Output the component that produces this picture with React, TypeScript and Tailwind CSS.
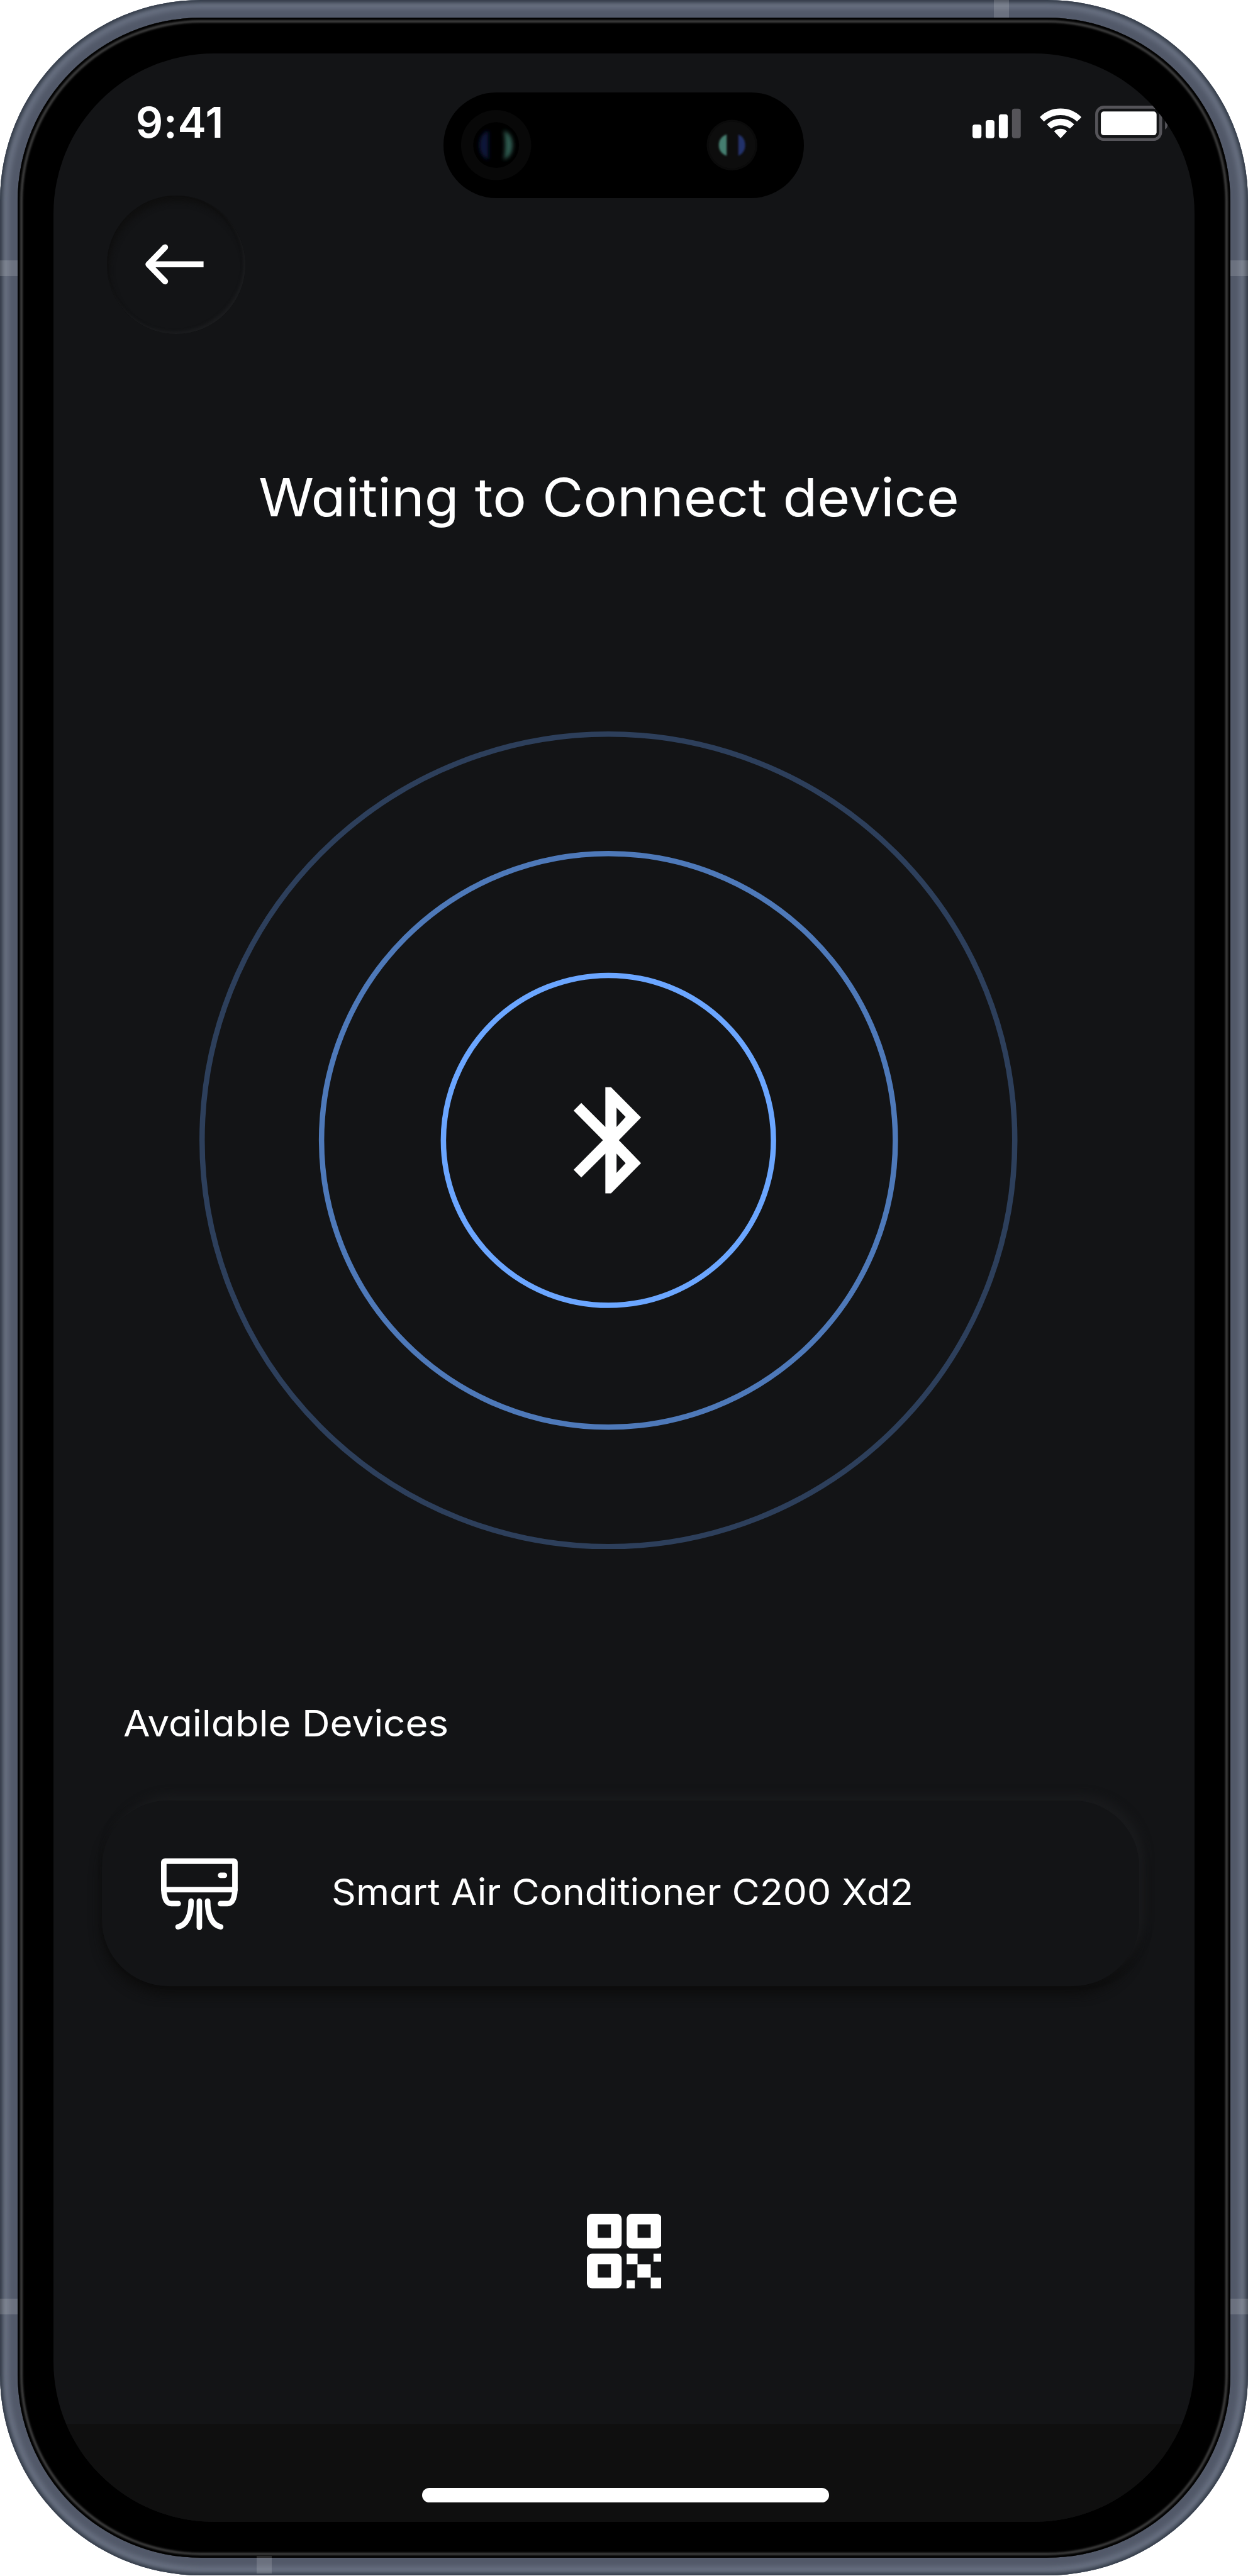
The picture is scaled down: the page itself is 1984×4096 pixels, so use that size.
import React from "react";

const BANDS = [
  "left-0 top-[413.8px] h-[24.8px] w-[28px]",
  "right-0 top-[413.8px] h-[24.8px] w-[28px]",
  "left-0 top-[3655px] h-[24.8px] w-[28px]",
  "right-0 top-[3655px] h-[24.8px] w-[28px]",
  "left-[1579.5px] top-0 h-[28px] w-[24.8px]",
  "left-[407.6px] top-[4064px] h-[28px] w-[24.8px]",
];

function StatusIcons() {
  return (
    <svg viewBox="105 82 1215 217" className="mt-[14.2px] h-[56.06px] w-[313.9px]">
      <g fill="#fff">
        <rect x="105" y="198" width="55" height="84" rx="15" />
        <rect x="186" y="171" width="54" height="111" rx="15" />
        <rect x="267" y="135" width="55" height="147" rx="15" />
        <rect x="348" y="100" width="54" height="182" rx="15" fill="#555459" />
      </g>
      <g fill="#fff" stroke="#fff" strokeWidth="6" strokeLinejoin="round">
        <path d="M523 153 A178 178 0 0 1 771 153 L748 176 A152 152 0 0 0 545 176 Z" />
        <path d="M567 197 A118 118 0 0 1 727 197 L704 219 A95 95 0 0 0 589 219 Z" />
        <path d="M611 240 A58 58 0 0 1 683 240 L647 278 Z" />
      </g>
      <rect x="869" y="91" width="394" height="199" rx="45" fill="none" stroke="#555459" strokeWidth="18" />
      <rect x="895" y="118" width="343" height="146" rx="18" fill="#fff" />
      <path d="M1290 152 C1313 160 1313 220 1290 228 Z" fill="#555459" />
    </svg>
  );
}

function DynamicIsland() {
  return (
    <div className="absolute left-[620px] top-[62px] h-[167.4px] w-[573px] rounded-full bg-black">
      <svg viewBox="910 190 739.5 216" className="h-full w-full">
        <defs>
          <filter id="lens" x="-50%" y="-50%" width="200%" height="200%">
            <feGaussianBlur stdDeviation="4" />
          </filter>
          <filter id="lensSmall" x="-50%" y="-50%" width="200%" height="200%">
            <feGaussianBlur stdDeviation="2.4" />
          </filter>
        </defs>
        <circle cx="1018" cy="298" r="72" fill="#080808" />
        <circle cx="1018" cy="298" r="47" fill="#000" />
        <g filter="url(#lens)">
          <path d="M1002 268 Q984 276 984 298 Q984 320 1002 328 Z" fill="#10193a" />
          <path d="M1034 268 Q1052 276 1052 298 Q1052 320 1034 328 Q1039 298 1034 268 Z" fill="#2f5a4f" />
        </g>
        <circle cx="1502" cy="298" r="52" fill="#0a0a0a" />
        <circle cx="1502" cy="298" r="48" fill="#0d0d0d" />
        <g filter="url(#lensSmall)">
          <path d="M1491 276 Q1475 282 1475 298 Q1475 314 1491 320 Z" fill="#447e70" />
          <path d="M1515 276 Q1529 282 1529 298 Q1529 314 1515 320 Z" fill="#22306a" />
        </g>
      </svg>
    </div>
  );
}

function BackButton() {
  return (
    <button className="ml-[84.5px] flex size-[220px] items-center justify-center rounded-full bg-[#131416] pr-[4.3px] shadow-[inset_-3px_-4px_4px_#1b1c1e,inset_3px_9px_10px_#0f0f0f]">
      <svg viewBox="298 500 120 86" className="h-[66.65px] w-[93px]" fill="none" stroke="#fff" strokeWidth="12.4">
        <path d="M338.5 508 L304.5 543 L338.5 578" strokeLinecap="round" strokeLinejoin="round" />
        <path d="M304.5 543 H417.5" />
      </svg>
    </button>
  );
}

function Radar() {
  return (
    <svg viewBox="0 0 1678 1678" className="mt-[320.9px] size-[1300.5px]">
      <g fill="none" strokeWidth="11">
        <circle cx="839" cy="839" r="833.5" stroke="#2d3f5b" />
        <circle cx="839" cy="839" r="588.5" stroke="#4e79b9" />
        <circle cx="839" cy="839" r="338.5" stroke="#6ba6ff" />
      </g>
      <path
        transform="translate(691 680) scale(0.33333)"
        fill="#fff"
        fillRule="evenodd"
        d="M425 150 H460 L645 336 L508 476 L645 617 L460 803 H425 V558 L277 705 L230 658 L410 476 L230 294 L277 247 L425 395 Z M494 276 V395 L550 333 Z M494 558 V677 L550 617 Z"
      />
    </svg>
  );
}

function AirConditionerIcon() {
  return (
    <svg
      viewBox="62 70 472 440"
      className="mt-[3.7px] h-[113.7px] w-[121.9px]"
      fill="none"
      stroke="#fff"
      strokeWidth="34"
      strokeLinecap="round"
      strokeLinejoin="round"
    >
      <path d="M168 348 H125 C98 348 82 320 79 262 V95 Q79 87 87 87 H509 Q517 87 517 95 V262 C514 320 498 348 471 348 H428" />
      <path d="M79 262 H517" />
      <path d="M429 174 H452" />
      <path d="M298 333 V494" />
      <path d="M247 333 C247 420 220 480 167 491" />
      <path d="M349 333 C349 420 376 480 429 491" />
    </svg>
  );
}

function QrIcon() {
  return (
    <svg viewBox="130 127 460 459" className="mt-[362px] h-[118.6px] w-[118.8px] self-center">
      <g fill="#fff">
        <rect x="130" y="127" width="214" height="214" rx="32" />
        <rect x="375" y="127" width="215" height="214" rx="32" />
        <rect x="130" y="373" width="214" height="213" rx="32" />
        <rect x="375" y="373" width="67" height="65" />
        <rect x="540" y="373" width="50" height="49" />
        <rect x="441" y="438" width="82" height="82" />
        <rect x="523" y="520" width="67" height="66" />
        <rect x="375" y="536" width="50" height="50" />
      </g>
      <g fill="#131416">
        <rect x="197" y="193" width="81" height="82" />
        <rect x="442" y="193" width="81" height="82" />
        <rect x="197" y="438" width="81" height="82" />
      </g>
    </svg>
  );
}

export default function App() {
  return (
    <div className="h-[4096px] w-[1984px] overflow-hidden bg-white font-['Inter',sans-serif] text-white">
      <div className="relative flex h-[4095px] w-[1984px] rounded-[319px] bg-[#525969] p-[28px] shadow-[inset_0_0_7px_4px_#2d3541,inset_0_0_8px_13px_#6d7586]">
        <div className="flex flex-1 rounded-[292px] bg-black p-[57.25px] shadow-[inset_0_0_3px_4px_#000,inset_0_0_3px_8px_#404040]">
          <div className="relative flex flex-1 flex-col overflow-hidden rounded-[255px] bg-[#131416]">
            <header className="flex h-[225.5px] shrink-0 items-start justify-between pl-[130.5px] pr-[38.7px] pt-[69px]">
              <span className="text-[68px] font-semibold leading-[80px] tracking-[0.8px]">9:41</span>
              <StatusIcons />
            </header>
            <DynamicIsland />
            <BackButton />
            <section className="flex flex-col items-center pr-[49px]">
              <h1 className="mt-[210.2px] h-[100.8px] scale-x-[1.065] whitespace-nowrap text-[84px] font-normal leading-[100px] [font-feature-settings:'cv11']">
                Waiting to Connect device
              </h1>
              <Radar />
            </section>
            <h2 className="ml-[110.5px] mt-[243.2px] h-[68.7px] origin-left scale-x-[1.066] self-start whitespace-nowrap text-[58px] font-normal leading-[68px] [font-feature-settings:'cv11']">
              Available Devices
            </h2>
            <div className="ml-[76.7px] mt-[87.5px] flex h-[295.7px] w-[1649px] shrink-0 items-center gap-[149px] rounded-[105px] bg-[#131416] pl-[94.3px] shadow-[9px_-10px_14px_#191a1c,-1px_13px_18px_#0d0d0d]">
              <AirConditionerIcon />
              <span className="-mt-[4.6px] origin-left scale-x-[1.045] whitespace-nowrap text-[58px] leading-[68px] [font-feature-settings:'cv11']">
                Smart Air Conditioner C200 Xd2
              </span>
            </div>
            <QrIcon />
            <footer className="mt-auto flex h-[155.4px] shrink-0 items-end justify-center bg-[#0f0f0f] pb-[31px] pl-[4px]">
              <div className="h-[23px] w-[647px] rounded-full bg-white" />
            </footer>
          </div>
        </div>
        {BANDS.map((band) => (
          <div key={band} className={`absolute bg-white/15 ${band}`} />
        ))}
      </div>
    </div>
  );
}
